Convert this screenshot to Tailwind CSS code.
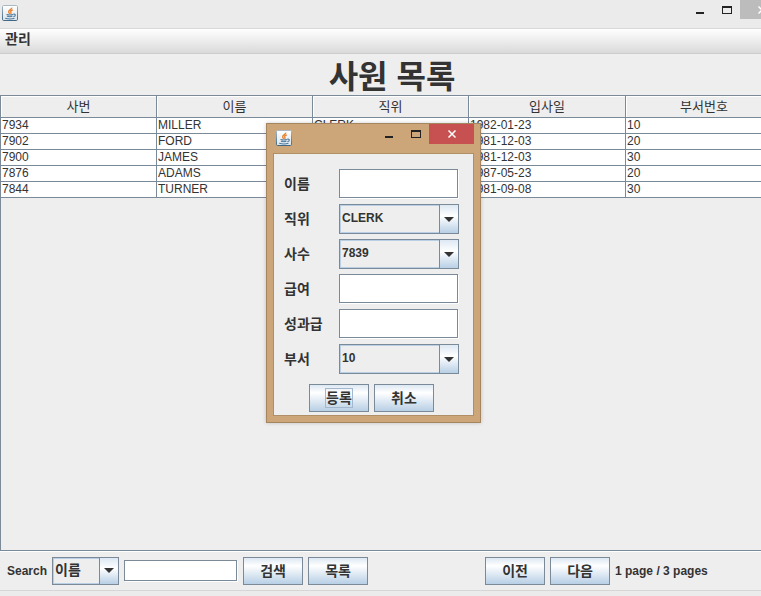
<!DOCTYPE html>
<html lang="ko">
<head>
<meta charset="utf-8">
<meta name="viewport" content="width=device-width, initial-scale=1">
<title>사원 목록</title>
<script src="https://cdn.jsdelivr.net/npm/@tailwindcss/browser@4"></script>
</head>
<body class="overflow-hidden bg-[#eeeeee] font-['Liberation_Sans','Noto_Sans_CJK_KR',sans-serif] text-xs text-[#333333]">
<svg class="absolute size-0" aria-hidden="true">
  <defs>
    <linearGradient id="tile" x1="0" y1="0" x2="0" y2="1"><stop offset="0" stop-color="#ffffff"/><stop offset="1" stop-color="#dbe4ea"/></linearGradient>
    <linearGradient id="edge" x1="0" y1="0" x2="0" y2="1"><stop offset="0" stop-color="#a9b8c3"/><stop offset="1" stop-color="#3f6884"/></linearGradient>
  </defs>
  <symbol id="java" viewBox="0 0 16 16">
    <rect x=".5" y=".5" width="15" height="15" rx="1.2" fill="url(#tile)" stroke="url(#edge)"/>
    <path d="M9.800 2.700C10.200 4.300 6.200 5 6.600 7c.1.700.8 1.100 1.200 1.900M10.800 4.800C8.600 5.600 8.200 6.400 8.900 7.300c.4.600.2 1.100-.300 1.600" fill="none" stroke="#e8802d" stroke-width="1.300"/>
    <path d="M4.500 9.500c1.600.500 4.900.500 6.500 0M5 11.300c1.500.500 4 .500 5.400 0M3.200 13.300c2.700.700 6.800.700 9.300 0M11.200 9.300c2.800-.800 2.800 1.800.2 2.300" fill="none" stroke="#4d7a9e" stroke-width="1.100"/>
  </symbol>
  <symbol id="minimize" viewBox="0 0 10 10"><path d="M1 7h8v2H1z" fill="#222"/></symbol>
  <symbol id="maximize" viewBox="0 0 10 10"><path d="M0 1h10v8H0zM1 3v5h8V3z" fill="#222" fill-rule="evenodd"/></symbol>
  <symbol id="close" viewBox="0 0 10 10"><path d="M1.500 1.500l7 7m0-7l-7 7" stroke="#fff" stroke-width="1.500"/></symbol>
  <symbol id="arrow" viewBox="0 0 10 5"><path d="M0 0h10L5 5z" fill="#333"/></symbol>
</svg>

<div class="flex min-h-screen w-[calc(100%+23px)] flex-col">
  <header class="flex h-[29px] shrink-0 justify-between border-b border-[#d9d9d9] bg-[#ebebeb] pl-0.5">
    <svg class="mt-[5px] size-4"><use href="#java"/></svg>
    <div class="flex h-[19px]">
      <button aria-label="최소화" class="grid w-[27px] place-items-center"><svg class="size-2.5"><use href="#minimize"/></svg></button>
      <button aria-label="최대화" class="grid w-[27px] place-items-center"><svg class="size-2.5"><use href="#maximize"/></svg></button>
      <button aria-label="닫기" class="grid w-11 place-items-center bg-[#bcbcbc]"><svg class="size-2.5"><use href="#close"/></svg></button>
    </div>
  </header>

  <nav class="flex h-[25px] shrink-0 items-center border-b border-[#cccccc] bg-linear-to-b from-white to-[#dadada] pl-[5px]">
    <button class="pb-1 text-sm leading-5 font-bold">관리</button>
  </nav>

  <h1 class="flex h-[41px] shrink-0 items-center justify-center pt-1 text-[32px] leading-9 font-bold">사원 목록</h1>

  <main class="flex-1 border border-[#7a8a99] shadow-[0_1px_0_#fff]">
    <table class="w-full table-fixed border-separate border-spacing-0 [&_td]:border-r [&_td]:border-b [&_td]:border-[#7a8a99] [&_td]:bg-white [&_td]:px-px [&_td]:leading-[15px] [&_th]:border-r [&_th]:border-b [&_th]:border-[#7a8a99] [&_th]:text-[13px] [&_th]:leading-[21px] [&_th]:font-normal [&_th]:shadow-[inset_1px_1px_0_#fff]">
      <colgroup><col class="w-[156px]"><col class="w-[156px]"><col class="w-[156px]"><col class="w-[157px]"><col></colgroup>
      <thead><tr><th>사번</th><th>이름</th><th>직위</th><th>입사일</th><th>부서번호</th></tr></thead>
      <tbody>
        <tr><td>7934</td><td>MILLER</td><td>CLERK</td><td>1982-01-23</td><td>10</td></tr>
        <tr><td>7902</td><td>FORD</td><td>ANALYST</td><td>1981-12-03</td><td>20</td></tr>
        <tr><td>7900</td><td>JAMES</td><td>CLERK</td><td>1981-12-03</td><td>30</td></tr>
        <tr><td>7876</td><td>ADAMS</td><td>CLERK</td><td>1987-05-23</td><td>20</td></tr>
        <tr><td>7844</td><td>TURNER</td><td>SALESMAN</td><td>1981-09-08</td><td>30</td></tr>
      </tbody>
    </table>
  </main>

  <footer class="shrink-0 border-b-[5px] border-[#ebebeb]">
    <div class="flex h-10 items-center border-b border-[#d6d6d6] pl-[7px] font-bold">
      <form class="flex items-center gap-[5px]">
        <label for="field">Search</label>
        <div class="grid h-7 w-[67px] border border-[#7a8a99]">
          <select id="field" class="col-start-1 row-start-1 min-w-0 appearance-none border border-[#b8cfe5] bg-[#eeeeee] pb-0.5 pl-px text-sm leading-5 font-bold"><option>이름</option></select>
          <span class="pointer-events-none col-start-1 row-start-1 grid w-[19px] place-items-center justify-self-end border-l border-[#7a8a99] bg-linear-to-b from-[#dde8f3] via-white via-40% to-[#b8cfe5]"><svg class="h-[5px] w-2.5"><use href="#arrow"/></svg></span>
        </div>
        <input aria-label="검색어" class="mr-px h-[21px] w-[113px] border border-[#7a8a99] bg-white px-1 shadow-[1px_1px_0_#fff]">
        <button type="button" class="h-7 w-15 border border-[#7a8a99] bg-linear-to-b from-[#dde8f3] via-white via-30% to-[#b8cfe5] text-sm font-bold">검색</button>
        <button type="button" class="h-7 w-15 border border-[#7a8a99] bg-linear-to-b from-[#dde8f3] via-white via-30% to-[#b8cfe5] text-sm font-bold">목록</button>
      </form>
      <div class="ml-[117px] flex items-center gap-[5px]">
        <button class="h-7 w-15 border border-[#7a8a99] bg-linear-to-b from-[#dde8f3] via-white via-30% to-[#b8cfe5] text-sm font-bold">이전</button>
        <button class="h-7 w-15 border border-[#7a8a99] bg-linear-to-b from-[#dde8f3] via-white via-30% to-[#b8cfe5] text-sm font-bold">다음</button>
        <span>1 page / 3 pages</span>
      </div>
    </div>
  </footer>
</div>

<section role="dialog" aria-label="사원 등록" class="absolute top-[123px] left-[266px] w-[215px] border border-[#a48560] bg-[#cca678] px-1.5 pb-1.5 shadow-[0_0_4px_rgba(0,0,0,0.2)]">
  <div class="flex h-[29px] justify-between pl-[3px]">
    <svg class="mt-1.5 size-4"><use href="#java"/></svg>
    <div class="flex h-5">
      <button aria-label="최소화" class="grid w-[27px] place-items-center"><svg class="size-2.5"><use href="#minimize"/></svg></button>
      <button aria-label="최대화" class="grid w-[27px] place-items-center"><svg class="size-2.5"><use href="#maximize"/></svg></button>
      <button aria-label="닫기" class="grid w-[45px] place-items-center bg-[#c75050]"><svg class="size-2.5"><use href="#close"/></svg></button>
    </div>
  </div>
  <form class="border border-[#b08e66] bg-[#eeeeee] pt-[15px] pr-[14px] pb-[3px] pl-2.5 font-bold">
    <div class="grid grid-cols-[55px_1fr] items-center gap-y-[5px] [&>label]:text-sm [&>label]:leading-5">
      <label for="name">이름</label>
      <div class="h-[30px] pr-px pb-px"><input id="name" class="block size-full border border-[#7a8a99] bg-white px-1 shadow-[1px_1px_0_#fff]"></div>
      <label for="job">직위</label>
      <div class="grid h-[30px] border border-[#7a8a99]">
        <select id="job" class="col-start-1 row-start-1 appearance-none border border-[#b8cfe5] bg-[#eeeeee] pb-0.5 pl-px font-bold"><option>CLERK</option></select>
        <span class="pointer-events-none col-start-1 row-start-1 grid w-[19px] place-items-center justify-self-end border-l border-[#7a8a99] bg-linear-to-b from-[#dde8f3] via-white via-40% to-[#b8cfe5]"><svg class="h-[5px] w-2.5"><use href="#arrow"/></svg></span>
      </div>
      <label for="mgr">사수</label>
      <div class="grid h-[30px] border border-[#7a8a99]">
        <select id="mgr" class="col-start-1 row-start-1 appearance-none border border-[#b8cfe5] bg-[#eeeeee] pb-0.5 pl-px font-bold"><option>7839</option></select>
        <span class="pointer-events-none col-start-1 row-start-1 grid w-[19px] place-items-center justify-self-end border-l border-[#7a8a99] bg-linear-to-b from-[#dde8f3] via-white via-40% to-[#b8cfe5]"><svg class="h-[5px] w-2.5"><use href="#arrow"/></svg></span>
      </div>
      <label for="sal">급여</label>
      <div class="h-[30px] pr-px pb-px"><input id="sal" class="block size-full border border-[#7a8a99] bg-white px-1 shadow-[1px_1px_0_#fff]"></div>
      <label for="comm">성과급</label>
      <div class="h-[30px] pr-px pb-px"><input id="comm" class="block size-full border border-[#7a8a99] bg-white px-1 shadow-[1px_1px_0_#fff]"></div>
      <label for="dept">부서</label>
      <div class="grid h-[30px] border border-[#7a8a99]">
        <select id="dept" class="col-start-1 row-start-1 appearance-none border border-[#b8cfe5] bg-[#eeeeee] pb-0.5 pl-px font-bold"><option>10</option></select>
        <span class="pointer-events-none col-start-1 row-start-1 grid w-[19px] place-items-center justify-self-end border-l border-[#7a8a99] bg-linear-to-b from-[#dde8f3] via-white via-40% to-[#b8cfe5]"><svg class="h-[5px] w-2.5"><use href="#arrow"/></svg></span>
      </div>
    </div>
    <div class="mt-2.5 flex justify-center gap-[5px]">
      <button type="button" class="grid h-7 w-15 place-items-center border border-[#7a8a99] bg-linear-to-b from-[#dde8f3] via-white via-30% to-[#b8cfe5] text-sm font-bold"><span class="border border-[#a3b8cc] leading-[18px]">등록</span></button>
      <button type="button" class="h-7 w-15 border border-[#7a8a99] bg-linear-to-b from-[#dde8f3] via-white via-30% to-[#b8cfe5] text-sm font-bold">취소</button>
    </div>
  </form>
</section>
</body>
</html>
